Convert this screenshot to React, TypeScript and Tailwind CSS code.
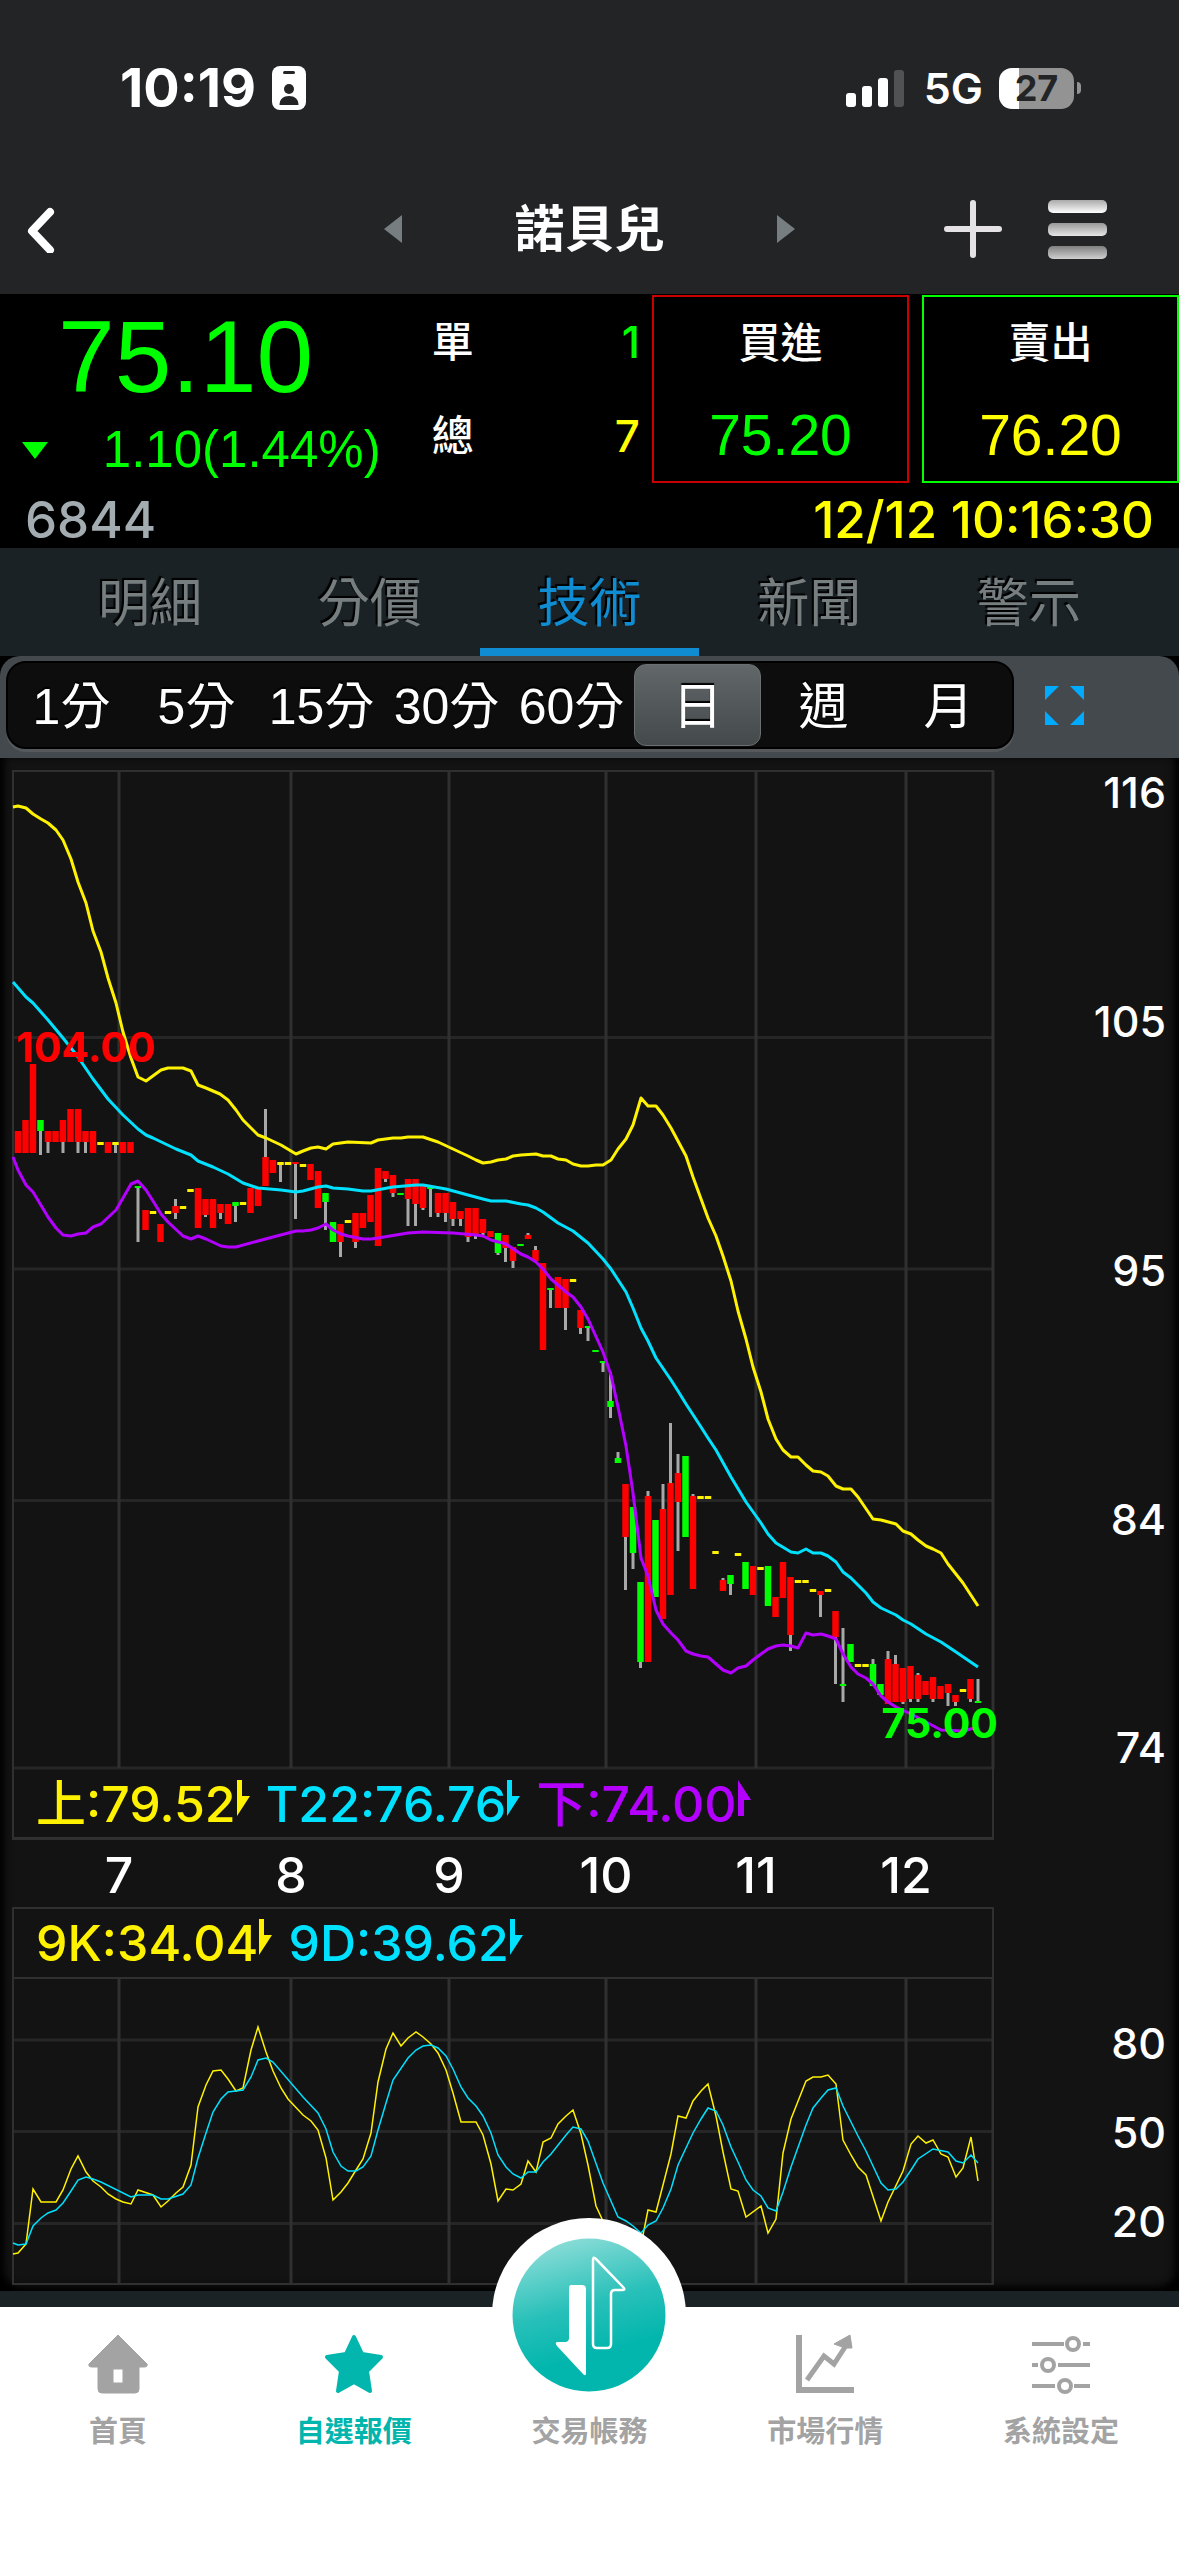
import React, { useState } from "react";

type Candle = [number, "r" | "g" | "y", number, number, number?, number?];

const RED = "#ff0000";
const GREEN = "#00ff00";
const YELLOW = "#fff200";
const CYAN = "#00e1ff";
const PURPLE = "#b400ff";

const COLORS = { r: RED, g: GREEN, y: YELLOW };

// index, colour, body top, body bottom, high, low
const candles: Candle[] = [
  [0, "r", 1131, 1153], [1, "r", 1120, 1153], [2, "r", 1064, 1153],
  [3, "g", 1120, 1131, 1120, 1155], [4, "r", 1131, 1142, 1131, 1153], [5, "r", 1131, 1142],
  [6, "r", 1120, 1142, 1120, 1153], [7, "r", 1109, 1142], [8, "r", 1109, 1142, 1109, 1153],
  [9, "r", 1131, 1142, 1131, 1153], [10, "r", 1131, 1153], [11, "y", 1142, 1145],
  [12, "r", 1142, 1153], [13, "y", 1142, 1145, 1142, 1153], [14, "r", 1142, 1153],
  [15, "r", 1142, 1153], [16, "g", 1186, 1188, 1186, 1242], [17, "r", 1210, 1230],
  [18, "y", 1211, 1214], [19, "r", 1224, 1242], [20, "y", 1211, 1214],
  [21, "r", 1206, 1213, 1199, 1219], [22, "y", 1206, 1209], [23, "y", 1189, 1192],
  [24, "r", 1188, 1228], [25, "r", 1199, 1215, 1199, 1217], [26, "r", 1199, 1228],
  [27, "r", 1204, 1213, 1204, 1219], [28, "r", 1204, 1224], [29, "g", 1202, 1206, 1202, 1222],
  [30, "y", 1202, 1205], [31, "r", 1188, 1213], [32, "r", 1188, 1206],
  [33, "r", 1157, 1186, 1109, 1186], [34, "r", 1160, 1173], [35, "y", 1162, 1165, 1162, 1182],
  [36, "y", 1162, 1165], [37, "r", 1162, 1164, 1162, 1219], [38, "y", 1164, 1167],
  [39, "r", 1164, 1180], [40, "r", 1171, 1208], [41, "g", 1193, 1202, 1193, 1230],
  [42, "g", 1222, 1242], [43, "r", 1224, 1242, 1224, 1257], [44, "y", 1220, 1223],
  [45, "r", 1213, 1242, 1213, 1248], [46, "r", 1213, 1228], [47, "r", 1195, 1222],
  [48, "r", 1168, 1246], [49, "r", 1171, 1179, 1171, 1182], [50, "r", 1175, 1193, 1175, 1197],
  [51, "g", 1193, 1195], [52, "r", 1179, 1199, 1179, 1226], [53, "r", 1179, 1204, 1179, 1226],
  [54, "r", 1186, 1208, 1186, 1210], [55, "g", 1187, 1189, 1187, 1217],
  [56, "r", 1193, 1213, 1193, 1217], [57, "r", 1193, 1213, 1193, 1222],
  [58, "r", 1202, 1219, 1202, 1226], [59, "r", 1211, 1219, 1211, 1226],
  [60, "r", 1208, 1237, 1208, 1242], [61, "r", 1208, 1236, 1208, 1239],
  [62, "r", 1219, 1233, 1219, 1235], [63, "r", 1231, 1237], [64, "g", 1233, 1253, 1233, 1255],
  [65, "r", 1235, 1248, 1235, 1262], [66, "r", 1247, 1261, 1247, 1268], [67, "g", 1244, 1246],
  [68, "r", 1235, 1239, 1233, 1239], [69, "r", 1250, 1261, 1246, 1261], [70, "r", 1263, 1350],
  [71, "g", 1288, 1290, 1288, 1308], [72, "r", 1277, 1308], [73, "r", 1279, 1308, 1279, 1330],
  [74, "y", 1279, 1282], [75, "r", 1310, 1328, 1310, 1334], [76, "g", 1326, 1328, 1326, 1341],
  [77, "g", 1350, 1352], [78, "g", 1361, 1363, 1361, 1372], [79, "g", 1401, 1407, 1372, 1418],
  [80, "g", 1458, 1463, 1452, 1463], [81, "r", 1484, 1537, 1484, 1590],
  [82, "g", 1507, 1553, 1507, 1569], [83, "g", 1582, 1662, 1582, 1668],
  [84, "r", 1496, 1662, 1491, 1662], [85, "g", 1520, 1597], [86, "r", 1509, 1619, 1484, 1619],
  [87, "r", 1483, 1595, 1423, 1595], [88, "r", 1473, 1502, 1454, 1551], [89, "g", 1456, 1537],
  [90, "r", 1496, 1589, 1494, 1589], [91, "y", 1496, 1499], [92, "y", 1496, 1499],
  [93, "y", 1551, 1554], [94, "r", 1580, 1591, 1578, 1591], [95, "g", 1575, 1584, 1575, 1595],
  [96, "y", 1553, 1556], [97, "g", 1562, 1589], [98, "r", 1566, 1595], [99, "y", 1567, 1570],
  [100, "g", 1566, 1606], [101, "r", 1597, 1617], [102, "r", 1562, 1598],
  [103, "r", 1577, 1635, 1577, 1651], [104, "y", 1580, 1583], [105, "y", 1580, 1583],
  [106, "y", 1589, 1592], [107, "r", 1591, 1595, 1591, 1617], [108, "y", 1589, 1592],
  [109, "r", 1611, 1637, 1611, 1684], [110, "g", 1684, 1686, 1628, 1702], [111, "g", 1644, 1662],
  [112, "y", 1664, 1667], [113, "y", 1664, 1667], [114, "g", 1664, 1686, 1659, 1686],
  [115, "g", 1684, 1695], [116, "r", 1659, 1704, 1651, 1704], [117, "r", 1664, 1702, 1655, 1702],
  [118, "r", 1668, 1702, 1668, 1704], [119, "r", 1666, 1699, 1666, 1702],
  [120, "r", 1675, 1699, 1673, 1702], [121, "r", 1681, 1695], [122, "r", 1677, 1699, 1677, 1702],
  [123, "r", 1686, 1699], [124, "r", 1684, 1693, 1684, 1706], [125, "r", 1695, 1702, 1695, 1706],
  [126, "y", 1689, 1692], [127, "r", 1679, 1699, 1679, 1702], [128, "g", 1701, 1703, 1679, 1702],
];

const upperBand =
  "13,807 18,806 26,808 33,814 41,819 48,823 56,830 63,840 71,859 78,882 86,903 93,931 101,952 108,978 116,1003 123,1032 131,1058 138,1077 146,1081 161,1070 168,1068 183,1068 191,1071 198,1085 206,1088 220,1094 228,1100 236,1110 243,1120 258,1135 266,1138 281,1145 296,1154 303,1151 311,1148 318,1147 326,1149 333,1144 348,1142 371,1143 378,1140 393,1138 401,1138 408,1137 423,1137 438,1142 453,1149 468,1156 476,1160 483,1163 491,1162 498,1160 506,1159 513,1156 521,1155 536,1154 543,1156 551,1156 558,1159 566,1160 573,1164 581,1166 588,1166 596,1165 603,1165 611,1160 618,1149 626,1139 633,1125 641,1098 648,1106 656,1106 663,1115 671,1128 686,1156 693,1177 708,1218 716,1236 723,1256 731,1281 738,1311 746,1339 753,1367 761,1392 768,1419 776,1439 783,1450 791,1457 798,1457 806,1465 813,1471 821,1472 828,1476 836,1486 843,1489 851,1489 858,1497 873,1519 881,1520 896,1524 903,1531 911,1534 918,1540 926,1546 933,1549 941,1553 948,1564 963,1583 978,1606";

const middleBand =
  "13,982 26,997 33,1003 48,1020 63,1038 78,1057 93,1079 108,1099 123,1115 138,1129 146,1135 153,1138 176,1149 191,1155 198,1161 213,1167 228,1174 243,1183 258,1188 281,1190 296,1192 303,1191 318,1187 326,1186 333,1188 348,1189 363,1191 371,1191 393,1187 416,1185 423,1185 446,1189 468,1195 483,1199 491,1201 506,1201 521,1204 528,1205 536,1208 543,1212 558,1223 573,1231 588,1243 603,1259 611,1269 626,1292 633,1308 641,1328 648,1341 656,1358 671,1380 678,1391 686,1404 701,1427 708,1438 716,1450 731,1477 746,1502 761,1523 768,1534 776,1543 791,1552 798,1553 806,1549 813,1553 821,1553 828,1556 836,1562 843,1572 851,1578 866,1593 873,1602 881,1608 896,1615 903,1620 911,1624 926,1634 941,1642 956,1652 978,1667";

const lowerBand =
  "13,1157 18,1170 26,1185 33,1192 48,1217 56,1228 63,1235 71,1236 78,1234 86,1233 93,1227 101,1224 116,1210 123,1198 131,1184 138,1181 146,1190 153,1201 161,1214 168,1222 183,1236 191,1239 198,1236 206,1239 221,1246 228,1247 236,1247 258,1241 273,1237 296,1231 303,1231 311,1230 318,1228 326,1224 333,1230 341,1234 348,1236 363,1239 371,1239 378,1238 408,1233 423,1232 453,1233 476,1235 483,1236 491,1240 506,1244 521,1254 528,1257 536,1262 543,1269 551,1279 566,1292 573,1297 581,1307 588,1319 603,1352 611,1375 618,1407 626,1446 633,1493 641,1558 648,1576 656,1610 663,1624 671,1633 678,1640 686,1651 693,1654 701,1656 708,1657 723,1670 731,1673 738,1668 746,1666 753,1660 761,1654 768,1649 776,1646 783,1645 791,1646 798,1648 806,1633 813,1635 821,1634 828,1636 836,1639 843,1654 851,1667 858,1674 866,1678 873,1684 881,1696 888,1702 896,1707 911,1714 926,1722 941,1730 963,1731 978,1727";

const kLine =
  "13,2254 18,2253 26,2244 33,2189 41,2202 56,2202 63,2190 71,2169 78,2156 86,2172 93,2181 101,2187 108,2194 116,2199 123,2202 131,2204 138,2190 153,2195 161,2207 168,2201 176,2193 183,2187 191,2165 198,2107 206,2085 213,2071 221,2070 228,2079 236,2091 243,2088 251,2050 258,2027 266,2052 273,2071 281,2088 288,2099 303,2115 311,2121 318,2130 326,2158 333,2200 341,2192 348,2183 356,2170 363,2159 371,2133 378,2082 386,2049 393,2033 401,2046 408,2038 416,2032 423,2037 431,2044 438,2053 446,2070 453,2093 461,2122 476,2122 483,2135 491,2164 498,2201 506,2189 513,2190 521,2184 528,2161 536,2172 543,2142 551,2138 558,2124 566,2116 573,2110 581,2134 588,2165 596,2206 603,2221 611,2236 618,2245 626,2248 633,2246 641,2245 648,2210 656,2212 663,2185 671,2154 678,2116 686,2118 693,2101 701,2091 708,2084 716,2116 723,2152 731,2189 738,2191 746,2217 761,2206 768,2233 776,2219 783,2153 791,2119 806,2081 813,2077 821,2077 828,2075 836,2084 843,2140 851,2155 858,2167 866,2175 881,2221 888,2202 903,2171 911,2144 918,2136 926,2143 933,2140 941,2154 948,2157 956,2177 963,2168 971,2137 978,2181";

const dLine =
  "13,2243 18,2245 26,2244 33,2226 41,2218 48,2213 56,2210 63,2203 71,2191 78,2180 86,2177 93,2179 101,2182 131,2197 138,2195 153,2195 161,2199 168,2199 183,2194 191,2185 198,2158 206,2133 213,2112 221,2099 228,2092 243,2090 251,2077 258,2060 266,2058 273,2062 303,2097 318,2113 326,2129 333,2152 341,2166 348,2171 356,2171 363,2167 371,2156 378,2130 386,2103 393,2080 408,2058 416,2050 423,2046 431,2045 438,2048 446,2056 453,2069 461,2087 468,2098 476,2106 483,2116 491,2133 498,2155 506,2167 513,2174 521,2178 528,2172 536,2172 543,2162 551,2154 566,2135 573,2127 581,2129 588,2141 603,2183 618,2217 626,2221 633,2226 641,2233 648,2225 656,2221 663,2208 671,2189 678,2165 693,2133 701,2119 708,2108 716,2111 723,2125 731,2147 738,2162 746,2180 753,2190 761,2196 768,2208 776,2211 783,2192 791,2167 806,2125 813,2108 821,2098 828,2090 836,2088 843,2106 858,2136 866,2151 873,2166 881,2183 888,2190 896,2189 903,2182 911,2170 918,2159 933,2149 948,2152 956,2161 963,2163 971,2155 978,2163";

const months = [
  { label: "7", x: 119 },
  { label: "8", x: 291 },
  { label: "9", x: 449 },
  { label: "10", x: 606 },
  { label: "11", x: 756 },
  { label: "12", x: 906 },
];

const tabs = ["明細", "分價", "技術", "新聞", "警示"];
const periods = ["1分", "5分", "15分", "30分", "60分", "日", "週", "月"];

const StatusBar = () => (
  <div className="flex h-[176px] items-center justify-between pl-[120px] pr-[98px] text-white">
    <div className="flex items-center gap-4">
      <span className="text-[54px] leading-[60px] font-bold">10:19</span>
      <svg className="h-11 w-[34px]" viewBox="0 0 34 44">
        <rect width="34" height="44" rx="8" fill="#fff" />
        <rect x="11" y="5" width="12" height="3" rx="1.5" fill="#222426" />
        <circle cx="17" cy="23" r="5" fill="#222426" />
        <path d="M7.500 39c0-6 4-9 9.500-9s9.500 3 9.500 9z" fill="#222426" />
      </svg>
    </div>
    <div className="flex items-center">
      <svg className="h-[37px] w-[58px]" viewBox="0 0 58 37">
        <rect x="0" y="23" width="10" height="14" rx="3" fill="#fff" />
        <rect x="16" y="16" width="10" height="21" rx="3" fill="#fff" />
        <rect x="32" y="8" width="10" height="29" rx="3" fill="#fff" />
        <rect x="48" y="0" width="10" height="37" rx="3" fill="#505254" />
      </svg>
      <span className="ml-5 text-[43px] leading-[60px] font-semibold">5G</span>
      <div className="ml-4 flex h-[41px] w-[75px] items-center justify-center rounded-[13px] bg-linear-to-r from-white from-27% to-[#939393] to-27%">
        <span className="text-[36px] leading-[41px] font-bold text-[#222426]">27</span>
      </div>
      <div className="ml-[3px] h-3 w-1 rounded-r-full bg-[#939393]" />
    </div>
  </div>
);

const Header = () => (
  <header className="flex h-[118px] items-center justify-between px-[26px] pb-3">
    <button aria-label="返回" className="flex w-[330px]">
      <svg className="h-12 w-8" viewBox="0 0 32 48">
        <path d="M24 7 6 26l18 19" fill="none" stroke="#fff" strokeWidth="8" strokeLinecap="round" strokeLinejoin="round" />
      </svg>
    </button>
    <div className="flex flex-1 items-center justify-between pl-7 pr-[42px]">
      <button aria-label="上一檔">
        <svg className="h-7 w-[18px]" viewBox="0 0 18 28">
          <path d="M18 0v28L0 14z" fill="#777e82" />
        </svg>
      </button>
      <h1 className="text-[50px] leading-[60px] font-bold text-white">諾貝兒</h1>
      <button aria-label="下一檔">
        <svg className="h-7 w-[18px]" viewBox="0 0 18 28">
          <path d="M0 0v28l18-14z" fill="#777e82" />
        </svg>
      </button>
    </div>
    <div className="flex w-[316px] items-center justify-end gap-[46px] pr-[46px]">
      <button aria-label="新增">
        <svg className="h-[58px] w-[58px]" viewBox="0 0 58 58">
          <path d="M29 3v52M3 29h52" stroke="#e4e2e5" strokeWidth="6" strokeLinecap="round" />
        </svg>
      </button>
      <button aria-label="選單" className="flex w-[59px] flex-col gap-[10px]">
        <span className="h-[13px] rounded-[5px] bg-linear-to-b from-[#aaaaaa] to-[#ffffff]" />
        <span className="h-[13px] rounded-[5px] bg-linear-to-b from-[#999999] to-[#e6e6e6]" />
        <span className="h-[13px] rounded-[5px] bg-linear-to-b from-[#808080] to-[#d0d0d0]" />
      </button>
    </div>
  </header>
);

const Quote = () => (
  <section className="bg-black">
    <div className="flex h-[189px] pt-px">
      <div className="w-[35%] pt-1 pl-[22px]">
        <div className="pl-9 font-[Liberation_Sans] text-[102px] leading-[116px] text-[#00ff00]">75.10</div>
        <div className="flex items-center justify-between pr-8 text-[#00ff00]">
          <svg className="h-[17px] w-[26px]" viewBox="0 0 26 17">
            <path d="M0 0h26L13 17z" fill="#00ff00" />
          </svg>
          <span className="font-[Liberation_Sans] text-[51px] leading-[70px]">1.10(1.44%)</span>
        </div>
      </div>
      <dl className="flex flex-1 flex-col pl-[19px] pr-3">
        <div className="flex flex-1 items-center justify-between">
          <dt className="text-[42px] leading-[50px] font-medium text-white">單</dt>
          <dd className="text-[44px] leading-[50px] font-medium text-[#00ff00]">1</dd>
        </div>
        <div className="flex flex-1 items-center justify-between">
          <dt className="text-[42px] leading-[50px] font-medium text-white">總</dt>
          <dd className="text-[44px] leading-[50px] font-medium text-[#ffff00]">7</dd>
        </div>
      </dl>
      <div className="flex w-[44.7%] gap-[13px]">
        <button className="flex flex-1 flex-col border-2 border-[#c80000]">
          <span className="flex w-full flex-1 items-center justify-center text-[42px] leading-[50px] font-medium text-white">買進</span>
          <span className="flex w-full flex-1 items-center justify-center font-[Liberation_Sans] text-[57px] leading-[60px] text-[#00ff00]">75.20</span>
        </button>
        <button className="flex flex-1 flex-col border-2 border-[#00ff00]">
          <span className="flex w-full flex-1 items-center justify-center text-[42px] leading-[50px] font-medium text-white">賣出</span>
          <span className="flex w-full flex-1 items-center justify-center font-[Liberation_Sans] text-[57px] leading-[60px] text-[#ffff00]">76.20</span>
        </button>
      </div>
    </div>
    <div className="flex h-[65px] items-center justify-between px-[25px] pt-2 text-[51px] leading-[56px] font-medium">
      <span className="text-[#a3acb0]">6844</span>
      <time className="text-[#ffff00]">12/12 10:16:30</time>
    </div>
  </section>
);

const Tabs = () => {
  const [active, setActive] = useState("技術");
  return (
    <nav className="flex h-[108px] bg-[#1b2225] px-10">
      {tabs.map((tab) => (
        <button
          key={tab}
          onClick={() => setActive(tab)}
          className={`flex-1 border-b-8 pt-3 text-[52px] leading-[80px] [text-shadow:-2px_-2px_1px_#000] ${
            active === tab ? "border-[#108dd2] text-[#108dd2]" : "border-transparent text-[#777e80]"
          }`}
        >
          {tab}
        </button>
      ))}
    </nav>
  );
};

const PeriodBar = () => {
  const [active, setActive] = useState("日");
  return (
    <div className="bg-black">
      <div className="flex h-[102px] items-center rounded-t-[20px] bg-[#43494c] pl-[6px] pb-1">
        <div className="flex h-[88px] flex-1 items-center rounded-[20px] border-2 border-black bg-[#0d0d0e] px-px shadow-[0_3px_0_#55595c]">
          {periods.map((period) => (
            <button
              key={period}
              onClick={() => setActive(period)}
              className={`h-[82px] flex-1 whitespace-nowrap rounded-[12px] pt-1 font-[Liberation_Sans,Noto_Sans_CJK_TC,sans-serif] text-[50px] leading-[76px] text-white [text-shadow:0_-2px_1px_#000] ${
                active === period
                  ? "border border-[#6b6f72] bg-linear-to-b from-[#62676a] to-[#44494c]"
                  : ""
              }`}
            >
              {period}
            </button>
          ))}
        </div>
        <button aria-label="全螢幕" className="flex w-[165px] pl-[31px]">
          <svg className="h-[39px] w-[39px]" viewBox="0 0 39 39" fill="#00aaff">
            <path d="M0 0h14L0 14zM39 0v14L25 0zM0 39V25l14 14zM39 39H25l14-14z" />
          </svg>
        </button>
      </div>
    </div>
  );
};

const PriceChart = () => (
  <svg className="block w-full overflow-visible" viewBox="12 770 982 999">
    <g stroke="#262626" strokeWidth="3">
      <path d="M12 1037.500H993M12 1269H993M12 1500.500H993M12 1768H993" />
    </g>
    <g stroke="#303030" strokeWidth="3">
      {months.map((m) => (
        <line key={m.label} x1={m.x} x2={m.x} y1="771" y2="1768" />
      ))}
      <line x1="12" x2="994" y1="771" y2="771" strokeWidth="2" />
      <line x1="13" x2="13" y1="771" y2="1769" strokeWidth="2" />
      <line x1="993" x2="993" y1="771" y2="1769" />
    </g>
    {candles.map(([i, color, top, bottom, high, low]) => {
      const x = 18 + i * 7.5;
      return (
        <g key={i}>
          {high !== undefined && low !== undefined && (
            <rect x={x - 1.5} y={high} width="3" height={low - high} fill="#a8a8a8" />
          )}
          <rect x={x - 3.25} y={top} width="6.5" height={bottom - top} rx="0.5" fill={COLORS[color]} />
        </g>
      );
    })}
    <g fill="none" strokeWidth="3" strokeLinejoin="round">
      <polyline points={upperBand} stroke={YELLOW} />
      <polyline points={middleBand} stroke={CYAN} />
      <polyline points={lowerBand} stroke={PURPLE} />
    </g>
    <text x="16" y="1062" fontSize="41" fontWeight="700" fill={RED}>104.00</text>
    <text x="998" y="1738" textAnchor="end" fontSize="41" fontWeight="700" fill={GREEN}>75.00</text>
  </svg>
);

const KdChart = () => (
  <svg className="block w-full" viewBox="12 1979 982 306">
    <g stroke="#262626" strokeWidth="3">
      <path d="M12 2040H993M12 2131.500H993M12 2223.500H993" />
    </g>
    <g stroke="#303030" strokeWidth="3">
      {months.map((m) => (
        <line key={m.label} x1={m.x} x2={m.x} y1="1979" y2="2284" />
      ))}
      <line x1="12" x2="994" y1="2284" y2="2284" strokeWidth="2" />
      <line x1="13" x2="13" y1="1979" y2="2284" strokeWidth="2" />
      <line x1="993" x2="993" y1="1979" y2="2284" />
    </g>
    <g fill="none" strokeWidth="1.5">
      <polyline points={kLine} stroke={YELLOW} />
      <polyline points={dLine} stroke={CYAN} />
    </g>
  </svg>
);

const Arrow = ({ up = false }: { up?: boolean }) => (
  <svg className="mb-3 ml-px h-9 w-[13px]" viewBox="0 0 13 36" fill="currentColor">
    {up ? <path d="M0 0v36h6V20h7z" /> : <path d="M0 36V0h5v16h8z" />}
  </svg>
);

const Chart = () => (
  <section className="bg-black">
    <div className="grid grid-cols-[1fr_185px] rounded-b-[20px] bg-[#131313] pb-[6px] pl-3 pt-3 shadow-[inset_0_-8px_8px_-4px_#000,inset_8px_0_8px_-4px_#000,inset_-8px_0_8px_-4px_#000]">
      <PriceChart />
      <div className="flex flex-col justify-between pr-[13px] text-right text-[43px] leading-[44px] font-medium text-white">
        <span>116</span>
        <div className="flex flex-col gap-[205px]">
          <span>105</span>
          <span>95</span>
          <span>84</span>
        </div>
        <span>74</span>
      </div>

      <div className="col-start-1">
        <div className="flex h-[71px] items-center border-x-2 border-b-3 border-[#303030] pl-[22px] pt-[2px] text-[50px] leading-[60px] font-medium">
          <span className="flex items-center text-[#fff200]">上:79.52<Arrow /></span>
          <span className="ml-4 flex items-center text-[#00e1ff]">T22:76.76<Arrow /></span>
          <span className="ml-4 flex items-center text-[#b400ff]">下:74.00<Arrow up /></span>
        </div>
        <svg className="block w-full" viewBox="12 1840 982 67" fill="#fff">
          {months.map((m) => (
            <text key={m.label} x={m.x} y="1893" textAnchor="middle" fontSize="50" fontWeight="500">{m.label}</text>
          ))}
        </svg>
        <div className="flex h-[72px] items-center border-x-2 border-y-2 border-[#303030] pl-[22px] text-[50px] leading-[60px] font-medium">
          <span className="flex items-center text-[#fff200]">9K:34.04<Arrow /></span>
          <span className="ml-4 flex items-center text-[#00e1ff]">9D:39.62<Arrow /></span>
        </div>
      </div>

      <div className="col-start-1">
        <KdChart />
      </div>
      <div className="flex flex-col gap-[45px] pr-[13px] pt-[42px] text-right text-[43px] leading-[44px] font-medium text-white">
        <span>80</span>
        <span>50</span>
        <span>20</span>
      </div>
    </div>
    <div className="h-4 bg-[#1b2225]" />
  </section>
);

const HomeIcon = () => (
  <svg className="h-[60px] w-[60px]" viewBox="0 0 60 60" fill="currentColor">
    <path d="M30 1 59 30q1 3-3 3h-5v22q0 4-4 4H14q-4 0-4-4V33H4q-4 0-3-3zM25 35v14h10V35z" fillRule="evenodd" stroke="currentColor" strokeWidth="1" strokeLinejoin="round" />
  </svg>
);

const StarIcon = () => (
  <svg className="h-[60px] w-[60px]" viewBox="0 0 60 60" fill="currentColor" stroke="currentColor" strokeWidth="4" strokeLinejoin="round">
    <path d="M30 3l8 17 19 3-14 14 3 20-16-9-16 9 3-20L3 23l19-3z" />
  </svg>
);

const TrendIcon = () => (
  <svg className="h-[60px] w-[60px]" viewBox="0 0 60 60" fill="none" stroke="currentColor">
    <path d="M4 1v55h55" strokeWidth="6" />
    <path d="M12 46 29 22l10 8 13-20" strokeWidth="5" />
    <path d="M55 1 39 10l11 4 7 0z" fill="currentColor" strokeWidth="1" />
  </svg>
);

const SlidersIcon = () => (
  <svg className="h-[60px] w-[60px]" viewBox="0 0 60 60" fill="none" stroke="currentColor" strokeWidth="4">
    <path d="M1 10h32M52 10h7M1 31h6M27 31h32M1 52h23M43 52h16" />
    <circle cx="42" cy="10" r="6" />
    <circle cx="17" cy="31" r="6" />
    <circle cx="34" cy="52" r="6" />
  </svg>
);

const TradeIcon = () => (
  <svg className="h-[194px] w-[194px]" viewBox="0 0 194 194">
    <defs>
      <linearGradient id="trade" x1="0.3" y1="0" x2="0.55" y2="0.9">
        <stop offset="0" stopColor="#8eddd8" />
        <stop offset="0.5" stopColor="#27c0b9" />
        <stop offset="0.85" stopColor="#02b6ad" />
      </linearGradient>
    </defs>
    <circle cx="97" cy="97" r="97" fill="#fff" />
    <circle cx="97" cy="97" r="76.500" fill="url(#trade)" />
    <path d="M79 67h11q4 0 4 4v84q0 4-3 1L65 128q-3-4 1-4h7q4 0 4-4V71q0-4 2-4z" fill="#fff" />
    <path d="M101 42q0-4 3-1l27 28q3 3-1 3h-7q-4 0-4 4v50q0 4-4 4h-10q-4 0-4-4z" fill="none" stroke="#fff" strokeWidth="2.500" strokeLinejoin="round" />
  </svg>
);

const navItems = [
  { label: "首頁", icon: <HomeIcon /> },
  { label: "自選報價", icon: <StarIcon />, active: true },
  { label: "交易帳務", raised: true },
  { label: "市場行情", icon: <TrendIcon /> },
  { label: "系統設定", icon: <SlidersIcon /> },
];

const BottomNav = () => (
  <nav className="flex flex-1 bg-white pb-[100px]">
    {navItems.map((item) => (
      <a
        key={item.label}
        href="#"
        className={`relative flex flex-1 flex-col items-center gap-4 pt-[27px] text-[29px] leading-[44px] font-bold ${
          item.active ? "text-[#02b6ad]" : "text-[#a3a3a3]"
        }`}
      >
        {item.raised ? (
          <>
            <span className="h-[60px]" />
            <span className="absolute -top-[89px]"><TradeIcon /></span>
          </>
        ) : (
          item.icon
        )}
        <span className="relative">{item.label}</span>
      </a>
    ))}
  </nav>
);

export default function App() {
  return (
    <div className="flex min-h-screen flex-col bg-[#222426] font-[Inter,Noto_Sans_CJK_TC,sans-serif]">
      <StatusBar />
      <Header />
      <Quote />
      <Tabs />
      <PeriodBar />
      <Chart />
      <BottomNav />
    </div>
  );
}
